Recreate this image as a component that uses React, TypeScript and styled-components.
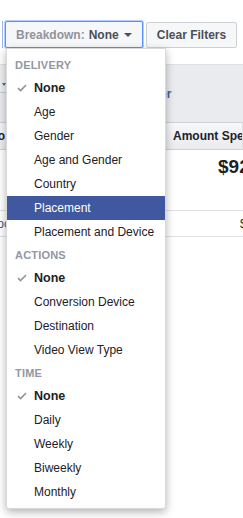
import React from "react"
import styled, { createGlobalStyle, css } from "styled-components"

const GlobalStyle = createGlobalStyle`
  html, body {
    margin: 0;
    padding: 0;
    background: #fff;
  }
  body {
    font-family: "Liberation Sans", Arial, Helvetica, sans-serif;
    font-size: 12px;
    color: #1d2129;
    overflow: hidden;
  }
`

const Page = styled.div`
  position: relative;
  width: 243px;
  height: 518px;
  overflow: hidden;
`

const Toolbar = styled.div`
  display: flex;
  align-items: flex-start;
  padding-top: 21px;
  height: 64px;
  box-sizing: border-box;
`

const Sliver = styled.div`
  width: 2px;
  height: 27px;
  border-right: 1px solid #9db7ef;
  margin-right: 2px;
`

const buttonBase = css`
  box-sizing: border-box;
  height: 27px;
  display: flex;
  align-items: center;
  background: #f6f7f9;
  border-radius: 2px;
  font-family: inherit;
  font-size: 12px;
  font-weight: bold;
  color: #4b4f56;
  white-space: nowrap;
`

const BreakdownButton = styled.div`
  ${buttonBase}
  width: 138px;
  padding-left: 10px;
  border: 1px solid #5890ff;
  box-shadow: 0 0 0 1px rgba(88, 144, 255, 0.45);
`

const Muted = styled.span`
  color: #90949c;
  margin-right: 4px;
`

const Caret = styled.span`
  display: inline-block;
  margin-left: 5px;
  margin-top: 1px;
  width: 0;
  height: 0;
  border-left: 4px solid transparent;
  border-right: 4px solid transparent;
  border-top: 4px solid #4b4f56;
`

const ClearButton = styled.div`
  ${buttonBase}
  margin-left: 3px;
  margin-top: 1px;
  height: 26px;
  width: 91px;
  justify-content: center;
  border: 1px solid #ced0d4;
`

/* table sitting behind the open menu */
const Table = styled.div`
  display: grid;
  grid-template-columns: 10px 156px 1fr;
`

const PanelCell = styled.div<{ $edge?: boolean }>`
  height: 58px;
  background: #e9ebee;
  border-top: 1px solid #dddfe2;
  box-sizing: border-box;
  display: flex;
  align-items: center;
  justify-content: flex-start;
  overflow: hidden;
  white-space: nowrap;
  ${(p) =>
    p.$edge &&
    css`
      align-items: flex-start;
    `}
`

const EdgeBox = styled.div`
  width: 100%;
  height: 28px;
  background: #eceef0;
  border-bottom: 1px solid #c9ccd1;
  border-right: 1px solid #d3d6db;
  box-sizing: border-box;
  position: relative;
`

const EdgeCaret = styled.span`
  position: absolute;
  left: 2px;
  top: 18px;
  border-left: 2px solid transparent;
  border-right: 2px solid transparent;
  border-top: 3px solid #4a66ad;
`

const PanelLink = styled.span`
  color: #4b5c9d;
  font-weight: bold;
  font-size: 12px;
  margin-left: -6px;
  margin-top: 1px;
`

const HeadCell = styled.div<{ $align?: "start" | "end" }>`
  height: 28px;
  box-sizing: border-box;
  background: linear-gradient(#f6f7f9, #e9ebee);
  border-top: 1px solid #cdd0d5;
  border-bottom: 1px solid #cdd0d5;
  border-right: 1px solid #dddfe2;
  display: flex;
  align-items: center;
  justify-content: ${(p) => (p.$align === "end" ? "flex-end" : "flex-start")};
  padding-left: ${(p) => (p.$align === "end" ? "0" : "7px")};
  overflow: hidden;
  white-space: nowrap;
  font-weight: bold;
  font-size: 12px;
  color: #1d2129;
`

const SummaryCell = styled.div<{ $pad?: number }>`
  height: 61px;
  box-sizing: border-box;
  border-bottom: 1px solid #dddfe2;
  padding-top: 6px;
  padding-left: ${(p) => p.$pad ?? 0}px;
  overflow: hidden;
  white-space: nowrap;
  font-size: 19px;
  font-weight: bold;
  color: #1d2129;
`

const RowCell = styled.div<{ $align?: "end"; $pad?: number }>`
  height: 26px;
  box-sizing: border-box;
  border-bottom: 1px solid #dddfe2;
  display: flex;
  align-items: center;
  justify-content: ${(p) => (p.$align === "end" ? "flex-end" : "flex-start")};
  padding-left: ${(p) => p.$pad ?? 0}px;
  overflow: hidden;
  white-space: nowrap;
  font-size: 12px;
`

const RowLink = styled.span`
  color: #365899;
`

/* dropdown menu */
const Menu = styled.div`
  position: absolute;
  left: 6px;
  top: 48px;
  width: 160px;
  box-sizing: border-box;
  padding: 5px 0 4px;
  background: #fff;
  border: 1px solid rgba(0, 0, 0, 0.15);
  border-radius: 0 0 3px 3px;
  box-shadow: 0 3px 8px rgba(0, 0, 0, 0.3);
`

const SectionLabel = styled.div`
  height: 22px;
  display: flex;
  align-items: center;
  padding-left: 8px;
  font-size: 11px;
  font-weight: bold;
  color: #9197a3;
  letter-spacing: 0.2px;
`

const Item = styled.div<{ $selected?: boolean; $active?: boolean }>`
  position: relative;
  height: 24px;
  display: flex;
  align-items: center;
  padding-left: 27px;
  font-size: 12px;
  color: #1d2129;
  white-space: nowrap;
  ${(p) =>
    p.$selected &&
    css`
      font-weight: bold;
      font-size: 12.5px;
    `}
  ${(p) =>
    p.$active &&
    css`
      background: #4058a0;
      color: #fff;
    `}
`

const Check = styled.svg`
  position: absolute;
  left: 10px;
  top: 8px;
`

function CheckMark() {
  return (
    <Check width="10" height="8" viewBox="0 0 10 8">
      <path
        d="M1 4.2 L3.6 6.6 L9 1"
        fill="none"
        stroke="#8d949e"
        strokeWidth="1.6"
      />
    </Check>
  )
}

interface Section {
  label: string
  items: string[]
}

const sections: Section[] = [
  {
    label: "DELIVERY",
    items: [
      "None",
      "Age",
      "Gender",
      "Age and Gender",
      "Country",
      "Placement",
      "Placement and Device",
    ],
  },
  {
    label: "ACTIONS",
    items: ["None", "Conversion Device", "Destination", "Video View Type"],
  },
  {
    label: "TIME",
    items: ["None", "Daily", "Weekly", "Biweekly", "Monthly"],
  },
]

const App: React.FC = () => {
  return (
    <Page>
      <GlobalStyle />
      <Toolbar>
        <Sliver />
        <BreakdownButton>
          <Muted>Breakdown:</Muted>
          None
          <Caret />
        </BreakdownButton>
        <ClearButton>Clear Filters</ClearButton>
      </Toolbar>

      <Table>
        <PanelCell $edge>
          <EdgeBox>
            <EdgeCaret />
          </EdgeBox>
        </PanelCell>
        <PanelCell />
        <PanelCell>
          <PanelLink>er</PanelLink>
        </PanelCell>

        <HeadCell $align="end">Campaign Info:</HeadCell>
        <HeadCell>Results</HeadCell>
        <HeadCell>Amount Spent</HeadCell>

        <SummaryCell />
        <SummaryCell />
        <SummaryCell $pad={52}>$92.18</SummaryCell>

        <RowCell $align="end">
          <RowLink>Doc</RowLink>
        </RowCell>
        <RowCell />
        <RowCell $pad={74}>$</RowCell>
      </Table>

      <Menu>
        {sections.map((section) => (
          <div key={section.label}>
            <SectionLabel>{section.label}</SectionLabel>
            {section.items.map((item, i) => (
              <Item
                key={item}
                $selected={i === 0}
                $active={item === "Placement"}
              >
                {i === 0 && <CheckMark />}
                {item}
              </Item>
            ))}
          </div>
        ))}
      </Menu>
    </Page>
  )
}

export default App
